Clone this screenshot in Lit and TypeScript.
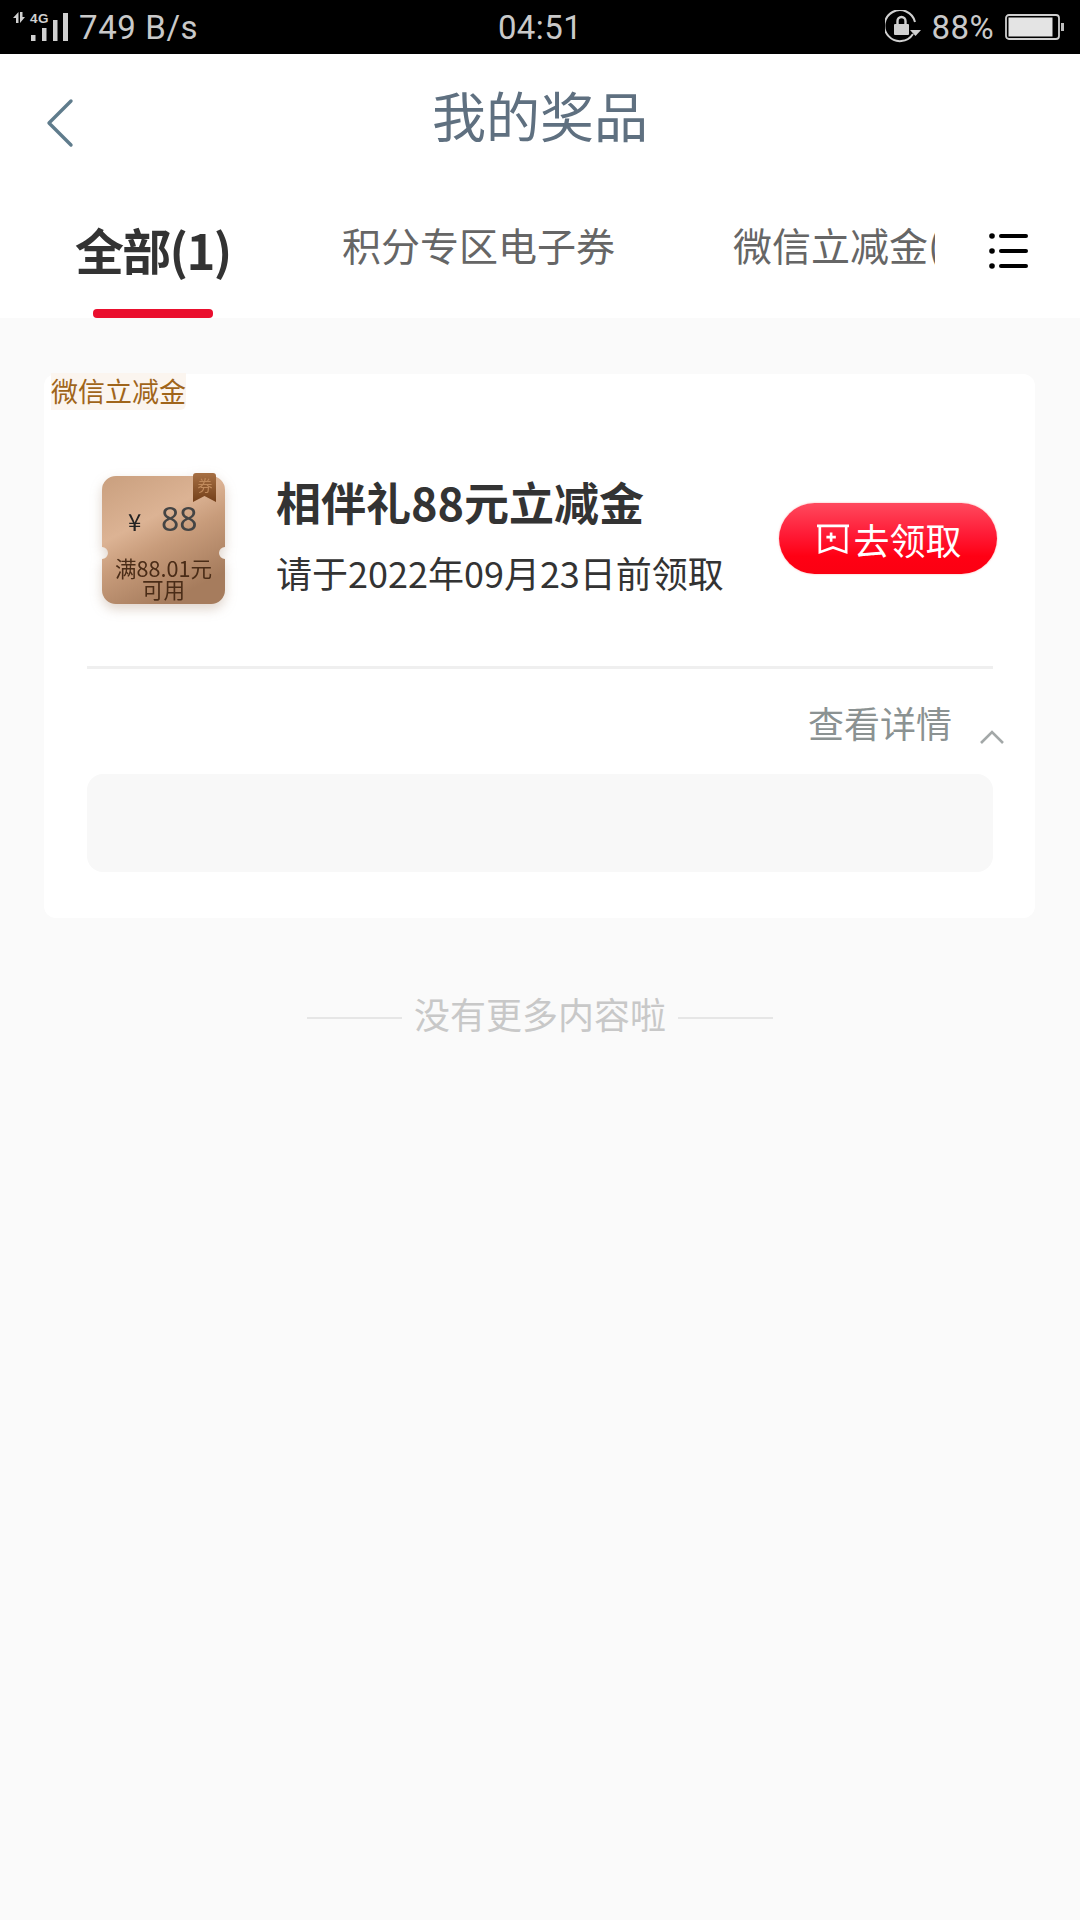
import { LitElement, html, css } from "lit";
import { customElement } from "lit/decorators.js";

@customElement("app-root")
export class AppRoot extends LitElement {
  static styles = css`
    :host { display: block; width: 1080px; height: 1920px; background: #fafafa; font-family: "Noto Sans CJK SC", "Noto Sans", sans-serif; overflow: hidden; }
    * { box-sizing: border-box; }
    .status { height: 54px; background: #000; color: #c9c9c9; display: flex; align-items: center; font-family: Roboto, sans-serif; font-size: 33px; position: relative; padding: 0 16px 0 11px; }
    .status .left { display: flex; align-items: center; gap: 10px; flex: 1; letter-spacing: 0.6px; }
    .status .clock { position: absolute; left: 0; right: 0; top: 0; bottom: 0; display: flex; align-items: center; justify-content: center; letter-spacing: 0.4px; }
    .status .right { display: flex; align-items: center; gap: 11px; position: relative; letter-spacing: 0.4px; }
    .header { height: 106px; background: #fff; display: flex; align-items: center; justify-content: center; position: relative; color: #5f7080; font-size: 54px; padding-top: 14px; }
    .back { position: absolute; left: 45px; top: 44px; }
    .tabs { height: 158px; background: #fff; position: relative; display: flex; align-items: flex-start; padding: 56px 0 0 76px; overflow: hidden; }
    .tab { font-size: 39px; color: #666; line-height: 56px; white-space: nowrap; }
    .tab.active { font-size: 49px; font-weight: 700; color: #333; line-height: 68px; letter-spacing: -1.7px; width: 266px; position: relative; top: -1px; left: -1px; margin-right: 0; }
    .tab.t2 { width: 391px; }
    .clip { width: 202px; overflow: hidden; }
    .bar { position: absolute; left: 93px; top: 149px; width: 120px; height: 9px; background: #ea0f2e; border-radius: 4px; }
    .menu { position: absolute; left: 988px; top: 73px; }
    .card { margin: 56px 45px 0 44px; height: 544px; background: #fff; border-radius: 12px; position: relative; padding: 0 42px 0 43px; }
    .tag { position: absolute; left: 7px; top: -1px; height: 37px; background: #fbf5ef; color: #a0651a; font-size: 27px; line-height: 35px; white-space: nowrap; border-radius: 0 0 6px 0; }
    .main { height: 295px; display: flex; align-items: flex-start; border-bottom: 3px solid #efefef; position: relative; }
    .ticket { position: absolute; left: 15px; top: 102px; width: 123px; height: 128px; filter: drop-shadow(0 5px 6px rgba(140,100,70,.28)); color: #3d3d3d; }
    .ticket svg { position: absolute; left: 0; top: -3px; }
    .yen { position: absolute; left: 26px; top: 25px; font-size: 24px; line-height: 40px; color: #222; }
    .amount { position: absolute; left: 59px; top: 19px; font-size: 32px; line-height: 48px; font-family: "Noto Sans", sans-serif; color: #444; }
    .cond { position: absolute; left: 0; right: 0; top: 81px; text-align: center; font-size: 21.6px; line-height: 21px; color: #4a2c17; white-space: nowrap; }
    .ribbon { position: absolute; left: 92px; top: -2px; width: 22px; text-align: center; font-size: 15px; line-height: 22px; color: #c08a5c; }
    .info { position: absolute; left: 189px; top: 95px; }
    .name { font-size: 45px; font-weight: 700; color: #333; line-height: 66px; white-space: nowrap; }
    .date { font-size: 36px; color: #333; line-height: 52px; margin-top: 11px; white-space: nowrap; }
    .btn { position: absolute; left: 692px; top: 129px; width: 218px; height: 71px; border-radius: 36px; background: linear-gradient(#ff4a5e 0%, #ff1a35 45%, #ff0014 75%, #fb0012 100%); color: #fff; font-size: 36px; display: flex; align-items: center; justify-content: center; gap: 3px; padding-left: 2px; box-shadow: 0 0 2px rgba(255,80,80,.5); }
    .more { height: 105px; display: flex; align-items: flex-start; justify-content: flex-end; position: relative; color: #8b9292; font-size: 36px; padding: 27px 41px 0 0; line-height: 52px; }
    .chev { position: absolute; right: -12px; top: 60px; }
    .panel { height: 98px; background: #f8f8f8; border-radius: 16px; }
    .end { margin-top: 67px; display: flex; align-items: center; justify-content: center; gap: 12px; color: #c8c8c8; font-size: 36px; line-height: 56px; }
    .end i { display: block; width: 95px; height: 2px; background: #e6e6e6; margin-top: 10px; }
  `;

  render() {
    return html`
      <div class="status">
        <div class="left">
          <svg width="58" height="44" viewBox="0 0 58 44" fill="#d0d0d0">
            <path d="M2 13 L7.500 7 V18 H5 V13 Z M9 7 H11.500 V12 H14 L9 18 Z"/>
            <text x="19" y="18" font-family="Liberation Sans, sans-serif" font-size="13.500" font-weight="700" fill="#d0d0d0">4G</text>
            <rect x="20" y="30" width="4.500" height="6"/><rect x="31" y="23" width="4.500" height="13"/><rect x="42" y="15" width="4.500" height="21"/><rect x="52" y="8" width="5" height="28"/>
          </svg>
          <span>749 B/s</span>
        </div>
        <div class="clock">04:51</div>
        <div class="right">
          <svg width="36" height="34" viewBox="0 0 36 34" fill="none" stroke="#d0d0d0" stroke-width="2">
            <path d="M28 24 A15.500 15.500 0 1 1 30 12" />
            <path d="M25 20 H36 L30.500 26 Z" fill="#d0d0d0" stroke="none"/>
            <rect x="9" y="14" width="15" height="11" rx="1" fill="#d0d0d0" stroke="none"/>
            <path d="M12.500 14 V11 a4 4 0 0 1 8 0 V14" stroke-width="2.400"/>
          </svg>
          <span>88%</span>
          <svg width="59" height="26" viewBox="0 0 59 26" fill="none">
            <rect x="1" y="1" width="53" height="24" rx="3" stroke="#cfcfcf" stroke-width="1.800"/>
            <rect x="3.500" y="3.500" width="44" height="19" fill="#e4e4e4"/>
            <rect x="56" y="9" width="3" height="8" fill="#bdbdbd"/>
          </svg>
        </div>
      </div>
      <div class="header">
        <svg class="back" width="30" height="50" viewBox="0 0 30 50" fill="none"><path d="M26 3 L4 25 L26 47" stroke="#5f7c8c" stroke-width="3.400" stroke-linecap="round" stroke-linejoin="round"/></svg>
        我的奖品
      </div>
      <div class="tabs">
        <div class="tab active">全部(1)</div>
        <div class="tab t2">积分专区电子券</div>
        <div class="clip"><div class="tab">微信立减金(1)</div></div>
        <div class="bar"></div>
        <svg class="menu" width="40" height="36" viewBox="0 0 40 36">
          <g fill="#000"><circle cx="4" cy="3" r="2.800"/><circle cx="4" cy="18" r="2.800"/><circle cx="4" cy="33" r="2.800"/>
          <rect x="11" y="1" width="29" height="4" rx="2"/><rect x="11" y="16" width="29" height="4" rx="2"/><rect x="11" y="31" width="29" height="4" rx="2"/></g>
        </svg>
      </div>
      <div class="card">
        <div class="tag">微信立减金</div>
        <div class="main">
          <div class="ticket">
            <svg width="123" height="131" viewBox="0 0 123 131">
              <defs>
                <linearGradient id="tg" x1="0" y1="0" x2="0.500" y2="1">
                  <stop offset="0" stop-color="#c99f7e"/><stop offset=".42" stop-color="#dcb394"/><stop offset=".62" stop-color="#c89c7b"/><stop offset="1" stop-color="#a67c5d"/>
                </linearGradient>
                <linearGradient id="rg" x1="0" y1="0" x2="0" y2="1"><stop offset="0" stop-color="#a66f43"/><stop offset="1" stop-color="#74401a"/></linearGradient>
              </defs>
              <path d="M14 3 H109 A14 14 0 0 1 123 17 V74 A6 6 0 0 0 123 86 V117 A14 14 0 0 1 109 131 H14 A14 14 0 0 1 0 117 V86 A6 6 0 0 0 0 74 V17 A14 14 0 0 1 14 3 Z" fill="url(#tg)"/>
              <path d="M91 3 Q91 0 94 0 H111 Q114 0 114 3 V29 L102.500 23 L91 29 Z" fill="url(#rg)"/>
            </svg>
            <span class="ribbon">券</span>
            <span class="yen">¥</span>
            <span class="amount">88</span>
            <div class="cond">满88.01元<br />可用</div>
          </div>
          <div class="info">
            <div class="name">相伴礼88元立减金</div>
            <div class="date">请于2022年09月23日前领取</div>
          </div>
          <div class="btn">
            <svg width="34" height="32" viewBox="0 0 36 34" fill="none" stroke="#fff" stroke-width="2.800">
              <path d="M1 3 H35 M4 3 V31 L18 26 L32 31 V3"/><path d="M11 15 H21 M16 10 V20"/>
            </svg>
            <span>去领取</span>
          </div>
        </div>
        <div class="more">
          查看详情
          <svg class="chev" width="26" height="16" viewBox="0 0 26 16" fill="none"><path d="M2 14 L13 3 L24 14" stroke="#a3a8a8" stroke-width="2.600"/></svg>
        </div>
        <div class="panel"></div>
      </div>
      <div class="end"><i></i><span>没有更多内容啦</span><i></i></div>
    `;
  }
}
